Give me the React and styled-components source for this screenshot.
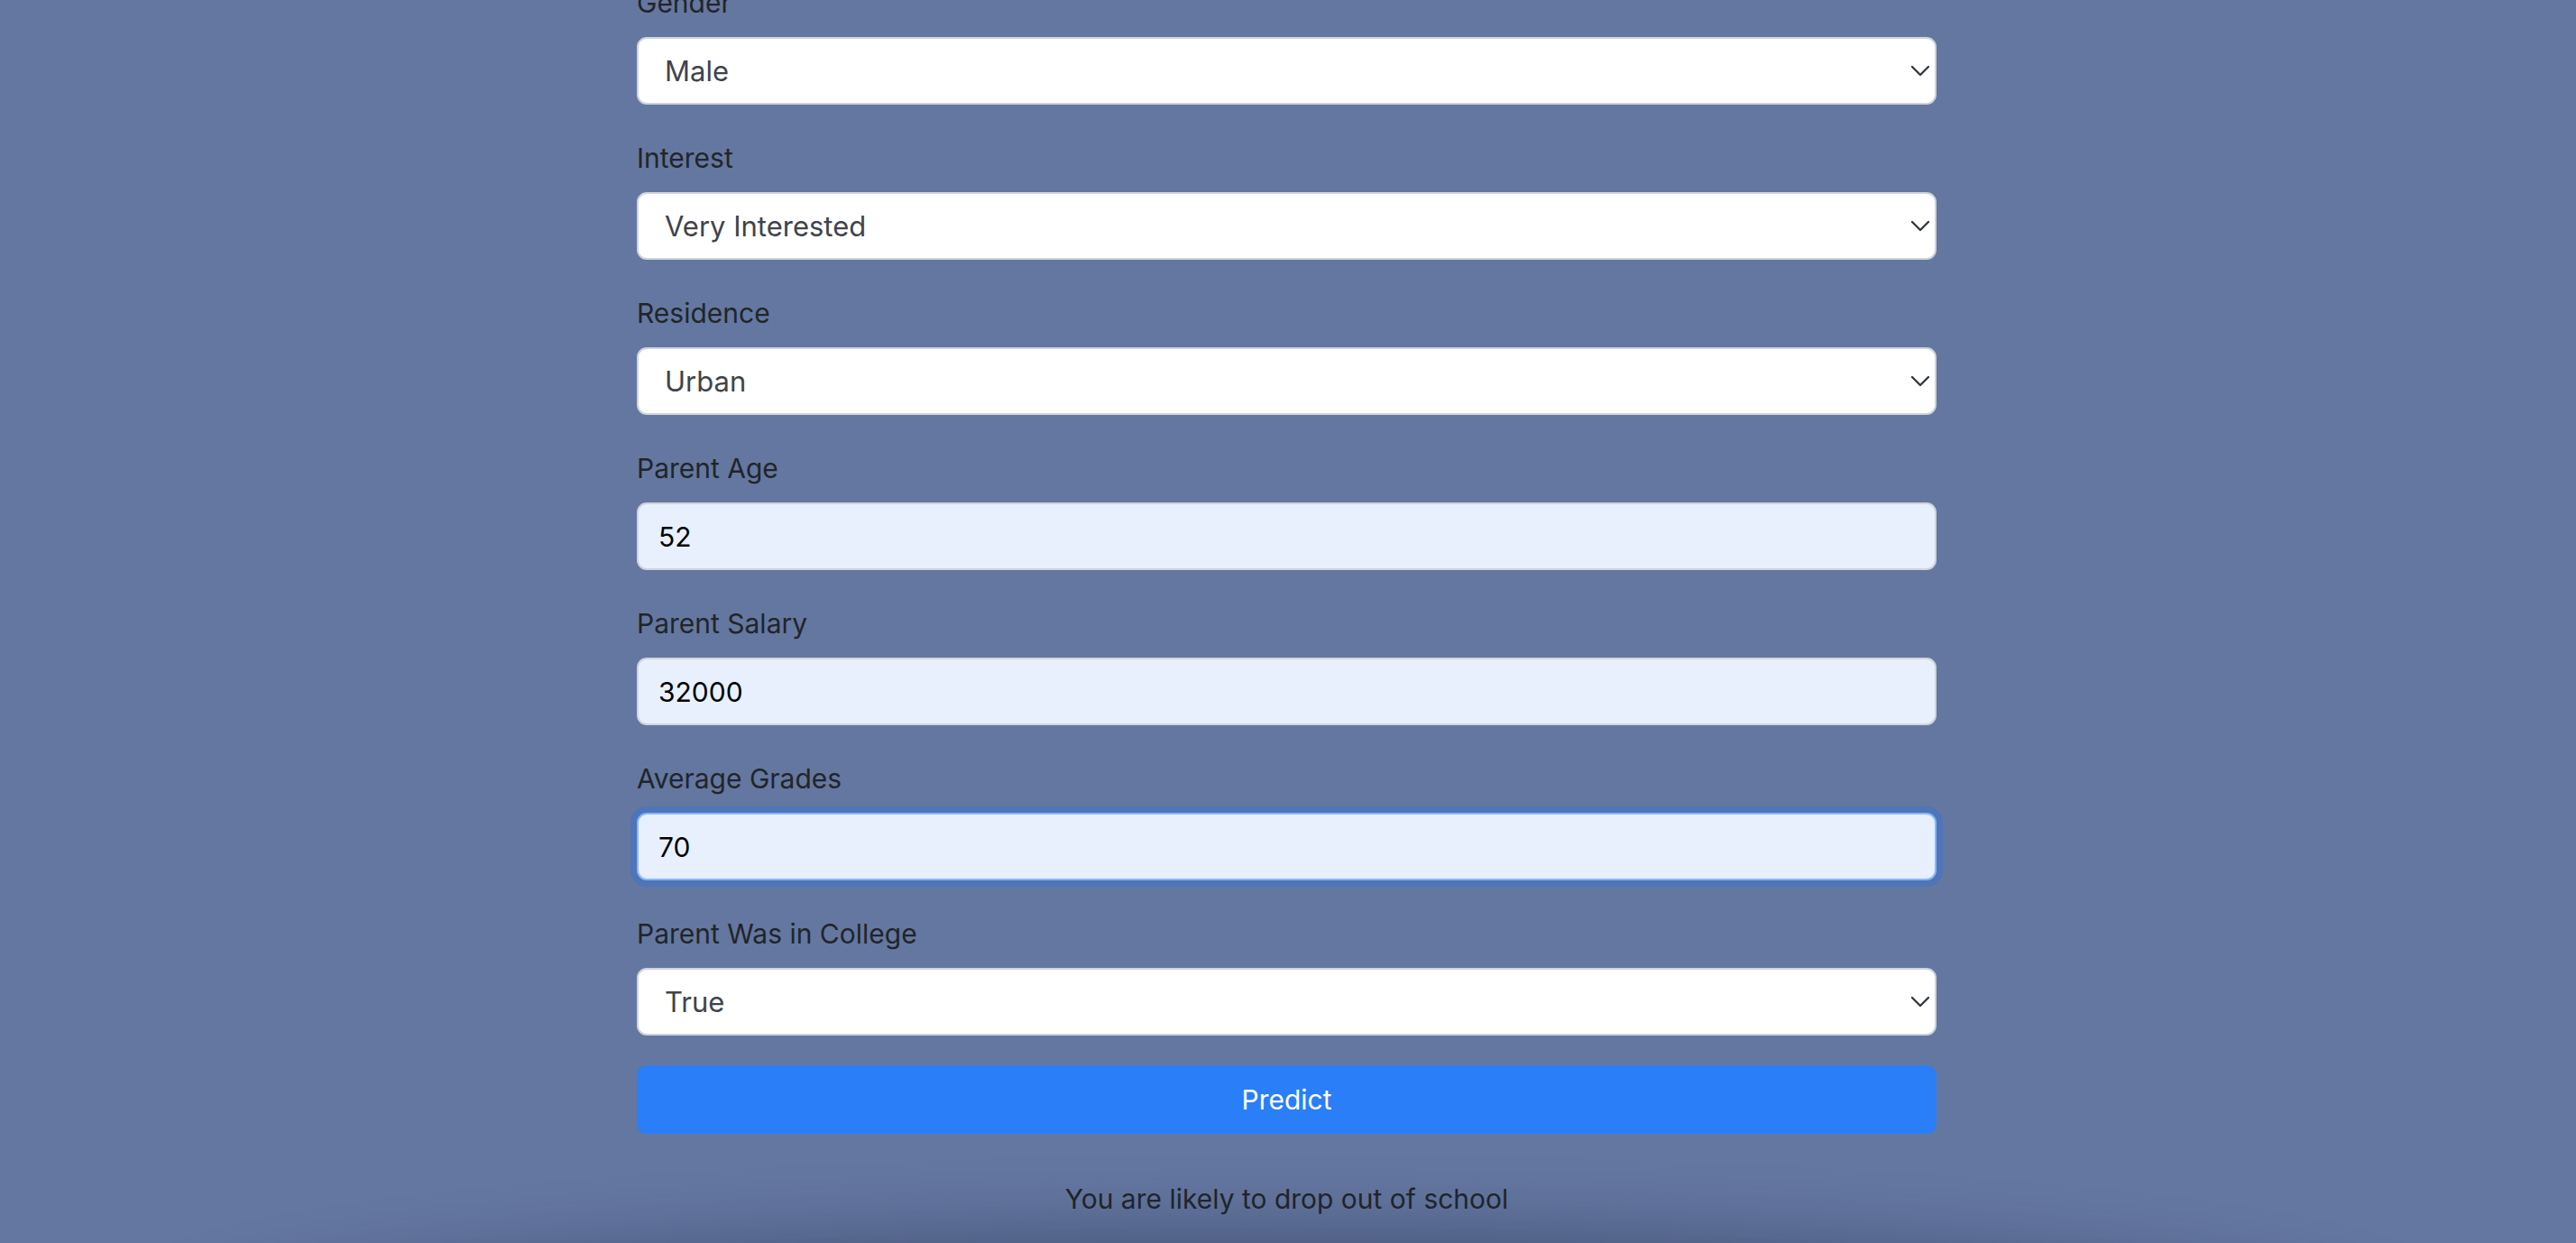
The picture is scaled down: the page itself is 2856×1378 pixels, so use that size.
import React from "react"
import styled, { createGlobalStyle } from "styled-components"

const GlobalStyle = createGlobalStyle`
  html, body {
    margin: 0;
    padding: 0;
    background: #6477a0;
    font-family: Inter, "Liberation Sans", Arial, sans-serif;
    overflow: hidden;
  }
`

const Page = styled.div`
  display: flex;
  flex-direction: column;
  align-items: center;
  padding-right: 3px;
`

const Form = styled.form`
  width: 1441px;
  margin-top: -19px;
  display: flex;
  flex-direction: column;
`

const Field = styled.div`
  display: flex;
  flex-direction: column;
  margin-bottom: 37px;
`

const Label = styled.label`
  font-size: 30px;
  line-height: 45px;
  color: #212529;
  margin-bottom: 15px;
`

const SelectWrap = styled.div`
  position: relative;
`

const Select = styled.select`
  appearance: none;
  -webkit-appearance: none;
  width: 100%;
  height: 75px;
  box-sizing: border-box;
  background: #fff;
  border: 2px solid #ced4da;
  border-radius: 11px;
  padding: 0 60px 0 29px;
  font-family: inherit;
  font-size: 31px;
  color: #3e444d;
  outline: none;
`

const Chevron = styled.svg`
  position: absolute;
  right: 6px;
  top: 50%;
  transform: translateY(-50%);
  pointer-events: none;
`

const Input = styled.input`
  width: 100%;
  height: 75px;
  box-sizing: border-box;
  background: #e8f0fe;
  border: 2px solid ${(p) => (p.$focused ? "#86b7fe" : "#ced4da")};
  border-radius: 11px;
  padding: 0 22px;
  font-family: inherit;
  font-size: 30px;
  color: #000;
  outline: none;
  box-shadow: ${(p) => (p.$focused ? "0 0 0 7px rgba(13, 110, 253, 0.25)" : "none")};
`

const Button = styled.button`
  height: 76px;
  margin-top: -4px;
  border: none;
  border-radius: 11px;
  background: #2a7ef8;
  color: #fff;
  font-family: inherit;
  font-size: 30px;
  cursor: pointer;
`

const Result = styled.div`
  margin-top: 50px;
  font-size: 30px;
  line-height: 45px;
  color: #212529;
  text-align: center;
`

const Footer = styled.div`
  width: 2450px;
  height: 200px;
  margin-top: 26px;
  border-radius: 50%;
  background: #5c6d95;
  box-shadow: 0 0 70px 20px rgba(30, 40, 70, 0.35);
`

const selects = {
  Gender: "Male",
  Interest: "Very Interested",
  Residence: "Urban",
}

function SelectField({ label, value }) {
  return (
    <Field>
      <Label>{label}</Label>
      <SelectWrap>
        <Select defaultValue={value}>
          <option>{value}</option>
        </Select>
        <Chevron width="24" height="16" viewBox="0 0 24 16">
          <path d="M3 3 L12 12 L21 3" fill="none" stroke="#343a40" strokeWidth="2.4" strokeLinecap="round" strokeLinejoin="round" />
        </Chevron>
      </SelectWrap>
    </Field>
  )
}

function InputField({ label, value, focused }) {
  return (
    <Field>
      <Label>{label}</Label>
      <Input defaultValue={value} $focused={focused} />
    </Field>
  )
}

export default function App() {
  return (
    <Page>
      <GlobalStyle />
      <Form onSubmit={(e) => e.preventDefault()}>
        {Object.entries(selects).map(([label, value]) => (
          <SelectField key={label} label={label} value={value} />
        ))}
        <InputField label="Parent Age" value="52" />
        <InputField label="Parent Salary" value="32000" />
        <InputField label="Average Grades" value="70" focused />
        <SelectField label="Parent Was in College" value="True" />
        <Button type="submit">Predict</Button>
      </Form>
      <Result>You are likely to drop out of school</Result>
      <Footer />
    </Page>
  )
}
